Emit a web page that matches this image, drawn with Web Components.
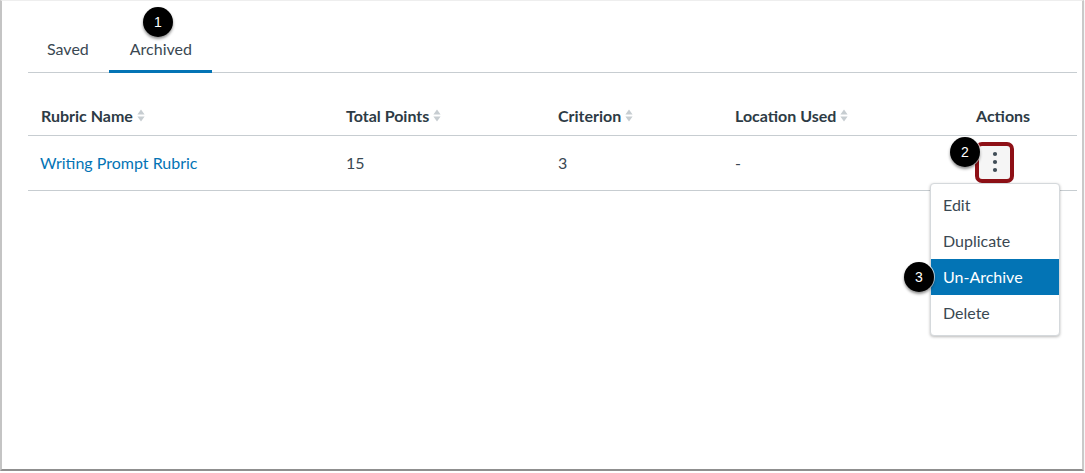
<!DOCTYPE html>
<html lang="en"><head><meta charset="utf-8"><title>Archived rubrics</title>
<style>html,body{margin:0;padding:0;background:#fff;font-family:Lato,"Liberation Sans",sans-serif;color:#2d3b45}</style>
</head><body>
<template id="t-frame"><style>
:host{display:block;box-sizing:border-box;width:1084px;height:471px;background:#fff;position:relative;
 border-left:2px solid #c4c4c4;border-right:2px solid #c9c9c9;border-bottom:2px solid #8f8f8f;border-top:1px solid #eee;padding:0 5px 0 26px;overflow:hidden;box-shadow:0 1px 1px #d0d0d0}
</style><slot></slot></template>

<template id="t-tabs"><style>
:host{display:flex;height:72px;box-sizing:border-box;border-bottom:1px solid #c7cdd1;align-items:stretch;position:relative}
</style><slot></slot></template>

<template id="t-tab"><style>
:host{display:flex;box-sizing:border-box;align-items:center;height:72px;padding:26px 20px 0 21px;font-size:16px;color:#3a4852;margin-bottom:-1px;border-bottom:3px solid transparent}
:host([active]){border-bottom-color:#0374b5}
:host([first]){padding-left:19px;padding-right:20px;}
</style><slot></slot></template>

<template id="t-table"><style>
:host{display:block;margin-top:30px}
</style><slot></slot></template>

<template id="t-row"><style>
:host{display:grid;grid-template-columns:318px 212px 177px 241px 1fr;box-sizing:border-box;border-bottom:1px solid #c7cdd1;align-items:center;font-size:16px;color:#3a4852}
:host([head]){height:33px;font-weight:700;align-items:start;padding-top:3px;color:#2d3b45}
:host(:not([head])){height:55px;padding-bottom:2px}
</style><slot></slot></template>

<template id="t-cell"><style>
:host{display:flex;align-items:center;gap:4px;padding-left:0;white-space:nowrap}
:host([lead]){padding-left:13px}
svg{display:block}
</style><slot></slot><svg part="sort" width="8" height="13" viewBox="0 0 8 13"><path d="M4 .5 7.6 5.4H.4Z M4 12.5 .4 7.6H7.6Z" fill="#c7cdd1"/></svg></template>

<template id="t-plain"><style>
:host{display:flex;align-items:center;white-space:nowrap}
:host([link]){padding-left:12px;color:#0374b5}
</style><slot></slot></template>

<template id="t-kebab"><style>
:host{display:flex;box-sizing:border-box;width:39px;height:41px;border:4px solid #8e1016;border-radius:7px;background:#f5f5f5;align-items:center;justify-content:center;margin:0 0 0 -1px}
svg{display:block}
</style><svg width="6" height="22" viewBox="0 0 6 22"><circle cx="3" cy="3" r="2.1" fill="#3f4c56"/><circle cx="3" cy="11" r="2.1" fill="#3f4c56"/><circle cx="3" cy="19" r="2.1" fill="#3f4c56"/></svg></template>

<template id="t-menu"><style>
:host{display:block;position:absolute;left:928px;top:182px;width:130px;box-sizing:border-box;background:#fff;border:1px solid #d5d9dc;border-radius:4px;box-shadow:0 1px 3px rgba(0,0,0,.28);padding:3px 0 4px;z-index:2}
</style><slot></slot></template>

<template id="t-item"><style>
:host{display:flex;box-sizing:border-box;align-items:center;height:36px;padding:0 0 2px 12px;font-size:16px;color:#3a4852}
:host([active]){background:#0374b5;color:#fff}
</style><slot></slot></template>

<template id="t-badge"><style>
:host{display:flex;position:absolute;width:30px;height:30px;border-radius:50%;background:#000;color:#fff;font:14px "Liberation Sans",Arial,sans-serif;align-items:center;justify-content:center;box-shadow:0 2px 3px rgba(0,0,0,.45),0 0 0 1px rgba(255,255,255,.75);z-index:3}
</style><slot></slot></template>

<app-frame>
 <tab-bar><tab-item first>Saved</tab-item><tab-item active>Archived</tab-item></tab-bar>
 <rubric-table>
  <table-row head>
   <sort-cell lead>Rubric Name</sort-cell><sort-cell>Total Points</sort-cell><sort-cell>Criterion</sort-cell><sort-cell>Location Used</sort-cell><plain-cell>Actions</plain-cell>
  </table-row>
  <table-row>
   <plain-cell link>Writing Prompt Rubric</plain-cell><plain-cell>15</plain-cell><plain-cell>3</plain-cell><plain-cell>-</plain-cell><plain-cell><kebab-button></kebab-button></plain-cell>
  </table-row>
 </rubric-table>
 <action-menu><menu-entry>Edit</menu-entry><menu-entry>Duplicate</menu-entry><menu-entry active>Un-Archive</menu-entry><menu-entry>Delete</menu-entry></action-menu>
 <step-badge style="left:141px;top:6px">1</step-badge>
 <step-badge style="left:948px;top:136px">2</step-badge>
 <step-badge style="left:902px;top:261px">3</step-badge>
</app-frame>
<script>
const defs={'app-frame':'t-frame','tab-bar':'t-tabs','tab-item':'t-tab','rubric-table':'t-table','table-row':'t-row','sort-cell':'t-cell','plain-cell':'t-plain','kebab-button':'t-kebab','action-menu':'t-menu','menu-entry':'t-item','step-badge':'t-badge'};
for(const [n,id] of Object.entries(defs)){
 customElements.define(n,class extends HTMLElement{constructor(){super();this.attachShadow({mode:'open'}).appendChild(document.getElementById(id).content.cloneNode(true));}});
}
</script>
</body></html>
